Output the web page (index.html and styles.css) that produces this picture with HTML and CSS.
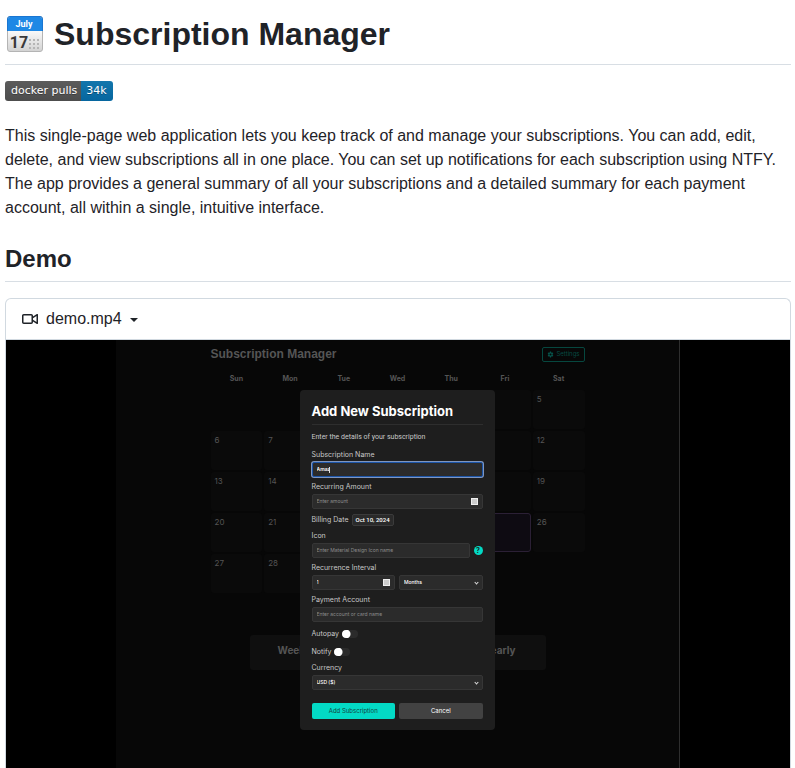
FILE: index.html
```html
<!DOCTYPE html>
<html lang="en">
<head>
<meta charset="utf-8">
<meta name="viewport" content="width=device-width, initial-scale=1">
<title>Subscription Manager</title>
<link rel="stylesheet" href="styles.css">
</head>
<body>
<main class="readme">
  <h1 class="title">
    <svg class="calendar-icon" viewBox="0 0 36 36" aria-hidden="true">
      <defs>
        <linearGradient id="paper" x1="0" y1="0" x2="0" y2="1">
          <stop offset="0.4" stop-color="#fafafa"/>
          <stop offset="1" stop-color="#d2d2d2"/>
        </linearGradient>
      </defs>
      <rect x="0.5" y="0.5" width="35" height="35" rx="2.5" fill="url(#paper)" stroke="#b4b4b4"/>
      <path d="M1 15V3a2 2 0 0 1 2-2h30a2 2 0 0 1 2 2v12z" fill="#1e88e5"/>
      <path d="M.5 15V3A2.500 2.500 0 0 1 3 .5h30A2.500 2.500 0 0 1 35.500 3v12" fill="none" stroke="#1976d2"/>
      <text x="17" y="11" class="cal-month">July</text>
      <text x="12" y="32" class="cal-day">17</text>
      <g fill="#b5b5b5">
        <path d="M22 23h2v2h-2zM26 23h2v2h-2zM30 23h2v2h-2zM22 27h2v2h-2zM26 27h2v2h-2zM30 27h2v2h-2zM22 31h2v2h-2zM26 31h2v2h-2zM30 31h2v2h-2z"/>
      </g>
    </svg>
    <span>Subscription Manager</span>
  </h1>

  <p class="badges"><a class="badge" href="#docker"><span class="badge-label">docker pulls</span><span class="badge-value">34k</span></a></p>

  <p class="intro">This single-page web application lets you keep track of and manage your subscriptions. You can add, edit, delete, and view subscriptions all in one place. You can set up notifications for each subscription using NTFY. The app provides a general summary of all your subscriptions and a detailed summary for each payment account, all within a single, intuitive interface.</p>

  <h2 class="section">Demo</h2>

  <details class="demo" open>
    <summary class="demo-bar">
      <svg class="video-icon" viewBox="0 0 16 16" aria-hidden="true"><path d="M16 3.75v8.5a.75.75 0 0 1-1.136.643L11 10.575v.675A1.75 1.75 0 0 1 9.25 13h-7.5A1.75 1.75 0 0 1 0 11.25v-6.5C0 3.784.784 3 1.75 3h7.5c.966 0 1.75.784 1.75 1.75v.675l3.864-2.318A.75.75 0 0 1 16 3.75Zm-6.5 1a.25.25 0 0 0-.25-.25h-7.5a.25.25 0 0 0-.25.25v6.5c0 .138.112.25.25.25h7.5a.25.25 0 0 0 .25-.25v-6.5ZM11 8.825l3.5 2.1v-5.85l-3.5 2.1Z"/></svg>
      <span>demo.mp4</span>
      <span class="caret"></span>
    </summary>
    <div class="video">
      <div class="stage">
        <div class="app">
          <div class="app-head">
            <span class="app-title">Subscription Manager</span>
            <button class="settings" type="button">
              <svg viewBox="0 0 24 24" aria-hidden="true"><path fill-rule="evenodd" d="M10 2h4l.6 3 2 1.2 3-1 2 3.500-2.300 2v2.600l2.300 2-2 3.500-3-1-2 1.200-.6 3h-4l-.6-3-2-1.200-3 1-2-3.500 2.300-2v-2.600l-2.300-2 2-3.500 3 1 2-1.200zM12 8.500a3.500 3.500 0 1 0 0 7 3.500 3.500 0 0 0 0-7z"/></svg>
              Settings
            </button>
          </div>
          <div class="week"><span>Sun</span><span>Mon</span><span>Tue</span><span>Wed</span><span>Thu</span><span>Fri</span><span>Sat</span></div>
          <div class="days">
            <i></i><i></i><span></span><span></span><span></span><span></span><span>5</span>
            <span>6</span><span>7</span><span></span><span></span><span></span><span></span><span>12</span>
            <span>13</span><span>14</span><span></span><span></span><span></span><span></span><span>19</span>
            <span>20</span><span>21</span><span></span><span></span><span></span><span class="today"></span><span>26</span>
            <span>27</span><span>28</span><span></span><span></span><span></span>
          </div>
          <div class="totals"><span>Weekly</span><span>Yearly</span></div>
        </div>

        <form class="dialog">
          <h3>Add New Subscription</h3>
          <p>Enter the details of your subscription</p>
          <div class="field">
            <label for="name">Subscription Name</label>
            <div class="box focused"><input id="name" type="text" value="Amaz" size="4"><span class="cursor"></span></div>
          </div>
          <div class="field">
            <label for="amount">Recurring Amount</label>
            <div class="box"><input id="amount" type="text" placeholder="Enter amount"><span class="spinner"></span></div>
          </div>
          <div class="date-row">
            <label for="date">Billing Date</label>
            <button id="date" class="date" type="button">Oct 10, 2024</button>
          </div>
          <div class="field">
            <label for="icon">Icon</label>
            <div class="pair">
              <div class="box"><input id="icon" type="text" placeholder="Enter Material Design Icon name"></div>
              <button class="help" type="button" aria-label="Help">?</button>
            </div>
          </div>
          <div class="field">
            <label for="interval">Recurrence Interval</label>
            <div class="pair">
              <div class="box"><input id="interval" type="text" value="1"><span class="spinner"></span></div>
              <div class="box"><select id="unit" aria-label="Interval unit"><option>Months</option></select><span class="chevron"></span></div>
            </div>
          </div>
          <div class="field">
            <label for="account">Payment Account</label>
            <div class="box"><input id="account" type="text" placeholder="Enter account or card name"></div>
          </div>
          <div class="toggle-row"><label for="autopay">Autopay</label><input id="autopay" class="toggle" type="checkbox"></div>
          <div class="toggle-row"><label for="notify">Notify</label><input id="notify" class="toggle" type="checkbox"></div>
          <div class="field">
            <label for="currency">Currency</label>
            <div class="box"><select id="currency"><option>USD ($)</option></select><span class="chevron"></span></div>
          </div>
          <div class="actions">
            <button class="primary" type="button">Add Subscription</button>
            <button class="cancel" type="button">Cancel</button>
          </div>
        </form>
      </div>
    </div>
  </details>
</main>
</body>
</html>
```
FILE: styles.css
```css
* { box-sizing: border-box; }

body {
  margin: 0;
  background: #fff;
  color: #1f2328;
  font: 16px/24px "Liberation Sans", Arial, sans-serif;
}

.readme {
  display: flex;
  flex-direction: column;
  min-height: 100vh;
  padding: 14px 4px 0 5px;
}

.title {
  display: flex;
  align-items: center;
  gap: 11px;
  margin: 0 0 16px;
  padding: 0 2px 10px;
  border-bottom: 1px solid #d8dee4;
  font-size: 32px;
  line-height: 40px;
}
.calendar-icon { width: 36px; height: 36px; }
.cal-month, .cal-day { font-family: Roboto, sans-serif; font-weight: 700; text-anchor: middle; }
.cal-month { font-size: 9px; fill: #fff; }
.cal-day { font-size: 16px; fill: #3a3a3a; }

.badges { display: flex; margin: 0; height: 43px; }
.badge {
  display: flex;
  height: 20px;
  border-radius: 3px;
  overflow: hidden;
  color: #fff;
  font: 11px/20px "DejaVu Sans", Verdana, sans-serif;
  text-decoration: none;
  text-shadow: 0 1px 0 rgba(1, 1, 1, 0.3);
}
.badge-label { padding: 0 4px 0 6px; background: linear-gradient(#5c5c5c, #4d4d4d); }
.badge-value { padding: 0 6px 0 5px; background: linear-gradient(#1376ac, #06669f); }

.intro { margin: 0 0 24px; }

.section {
  margin: 0 0 16px;
  padding-bottom: 7px;
  border-bottom: 1px solid #d8dee4;
  font-size: 24px;
  line-height: 30px;
}

.demo {
  border: 1px solid #d1d9e0;
  border-bottom: 0;
  border-radius: 6px 6px 0 0;
}
.demo-bar {
  display: flex;
  align-items: center;
  gap: 8px;
  height: 41px;
  padding: 0 16px;
  border-bottom: 1px solid #d1d9e0;
  list-style: none;
}
.video-icon { width: 16px; height: 16px; fill: #1f2328; }
.caret { border: 4px solid transparent; border-top-color: #1f2328; border-bottom: 0; margin-top: 2px; }

.video { background: #000; }
.stage {
  position: relative;
  width: 72%;
  min-height: 428px;
  margin: 0 auto;
  padding: 6px 0 0;
  border-right: 1px solid #2e2e2e;
  background: #070707;
  color: #555;
  font: 8px/10px Inter, sans-serif;
}
.app { max-width: 374px; margin: 0 auto; }
.app-head { display: flex; justify-content: space-between; align-items: center; height: 16px; margin-bottom: 12px; }
.app-title { font: bold 12px/16px "Liberation Sans", Arial, sans-serif; }
.settings {
  display: flex;
  align-items: center;
  gap: 3px;
  height: 15px;
  padding: 0 4px;
  border: 1px solid #06473f;
  border-radius: 2px;
  background: transparent;
  color: #064b43;
  font: 6px/10px Inter, sans-serif;
}
.settings svg { width: 7px; height: 7px; fill: #07564d; }
.week, .days { display: grid; grid-template-columns: repeat(7, 1fr); column-gap: 2px; }
.week { margin-bottom: 6px; text-align: center; font-weight: 700; font-size: 7px; }
.days { grid-auto-rows: 39px; row-gap: 2px; }
.days span { padding: 4px; border-radius: 3px; background: #0a0a0a; }
.days .today { border: 1px solid #2b2035; background: #0e0b12; }
.totals {
  display: flex;
  justify-content: space-between;
  margin: 42px 39px 0;
  padding: 10px 30px 14px 28px;
  border-radius: 3px;
  background: #0f0f0f;
  font-size: 10px;
  line-height: 11px;
  font-weight: 700;
}

/* Sits over the dimmed calendar */
.dialog {
  position: absolute;
  top: 50px;
  left: calc(50% - 98px);
  display: flex;
  flex-direction: column;
  gap: 5px;
  width: 195px;
  padding: 12px 12px 11px;
  border-radius: 4px;
  background: #1e1e1e;
  color: #c8c8c8;
  font: 7px/10px Inter, sans-serif;
}
.dialog h3 {
  margin: 0 0 2px;
  padding-bottom: 4px;
  border-bottom: 1px solid #2e2e2e;
  color: #fff;
  font-size: 13px;
  line-height: 18px;
}
.dialog p { margin: 0 0 3px; font-family: Roboto, sans-serif; }
.field { display: flex; flex-direction: column; gap: 2px; }
.box {
  display: flex;
  flex: 1;
  align-items: center;
  min-width: 0;
  height: 15px;
  min-height: 15px;
  padding: 0 4px;
  border: 1px solid #363636;
  border-radius: 2px;
  background: #2b2b2b;
}
.box input, .box select {
  flex: 1;
  min-width: 0;
  height: 13px;
  padding: 0;
  border: 0;
  outline: 0;
  appearance: none;
  background: transparent;
  color: #fff;
  font: 5px/13px Inter, sans-serif;
}
.box input::placeholder { color: #8c8c8c; }
.box select { font-weight: 500; }
.box.focused { border-color: #1c55a8; box-shadow: 0 0 0 1px #7f96bf; }
.box.focused input { flex: none; width: 12px; font-weight: 600; }
.cursor { width: 1px; height: 6px; background: #ddd; }
.spinner { width: 7px; height: 7px; border: 1px solid #eee; background: #ccc; }
.chevron { width: 3px; height: 3px; border: solid #ddd; border-width: 0 1px 1px 0; transform: rotate(45deg); }
.date-row { display: flex; align-items: center; gap: 3px; height: 12px; }
.date {
  height: 12px;
  padding: 0 3px;
  border: 1px solid #3b3b3b;
  border-radius: 2px;
  background: #2a2a2a;
  color: #fff;
  font: 500 6px/10px Roboto, sans-serif;
}
.pair { display: flex; align-items: center; gap: 4px; }
.help {
  width: 9px;
  height: 9px;
  padding: 0;
  border: 0;
  border-radius: 50%;
  background: #03dac5;
  color: #1e1e1e;
  font: bold 7px/9px Inter, sans-serif;
}
.toggle-row { display: flex; align-items: center; gap: 3px; height: 13px; }
.toggle {
  width: 16px;
  height: 8px;
  margin: 0;
  border-radius: 4px;
  appearance: none;
  background: radial-gradient(circle at 4px 4px, #fff 4px, #2b2b2b 5px);
}
.actions { display: flex; gap: 4px; margin-top: 8px; }
.actions button {
  flex: 1;
  height: 16px;
  padding: 0;
  border: 0;
  border-radius: 2px;
  font: 6px/16px Inter, sans-serif;
}
.actions .primary { background: #03dac5; color: #14433e; }
.actions .cancel { background: #424242; color: #fff; }
```
